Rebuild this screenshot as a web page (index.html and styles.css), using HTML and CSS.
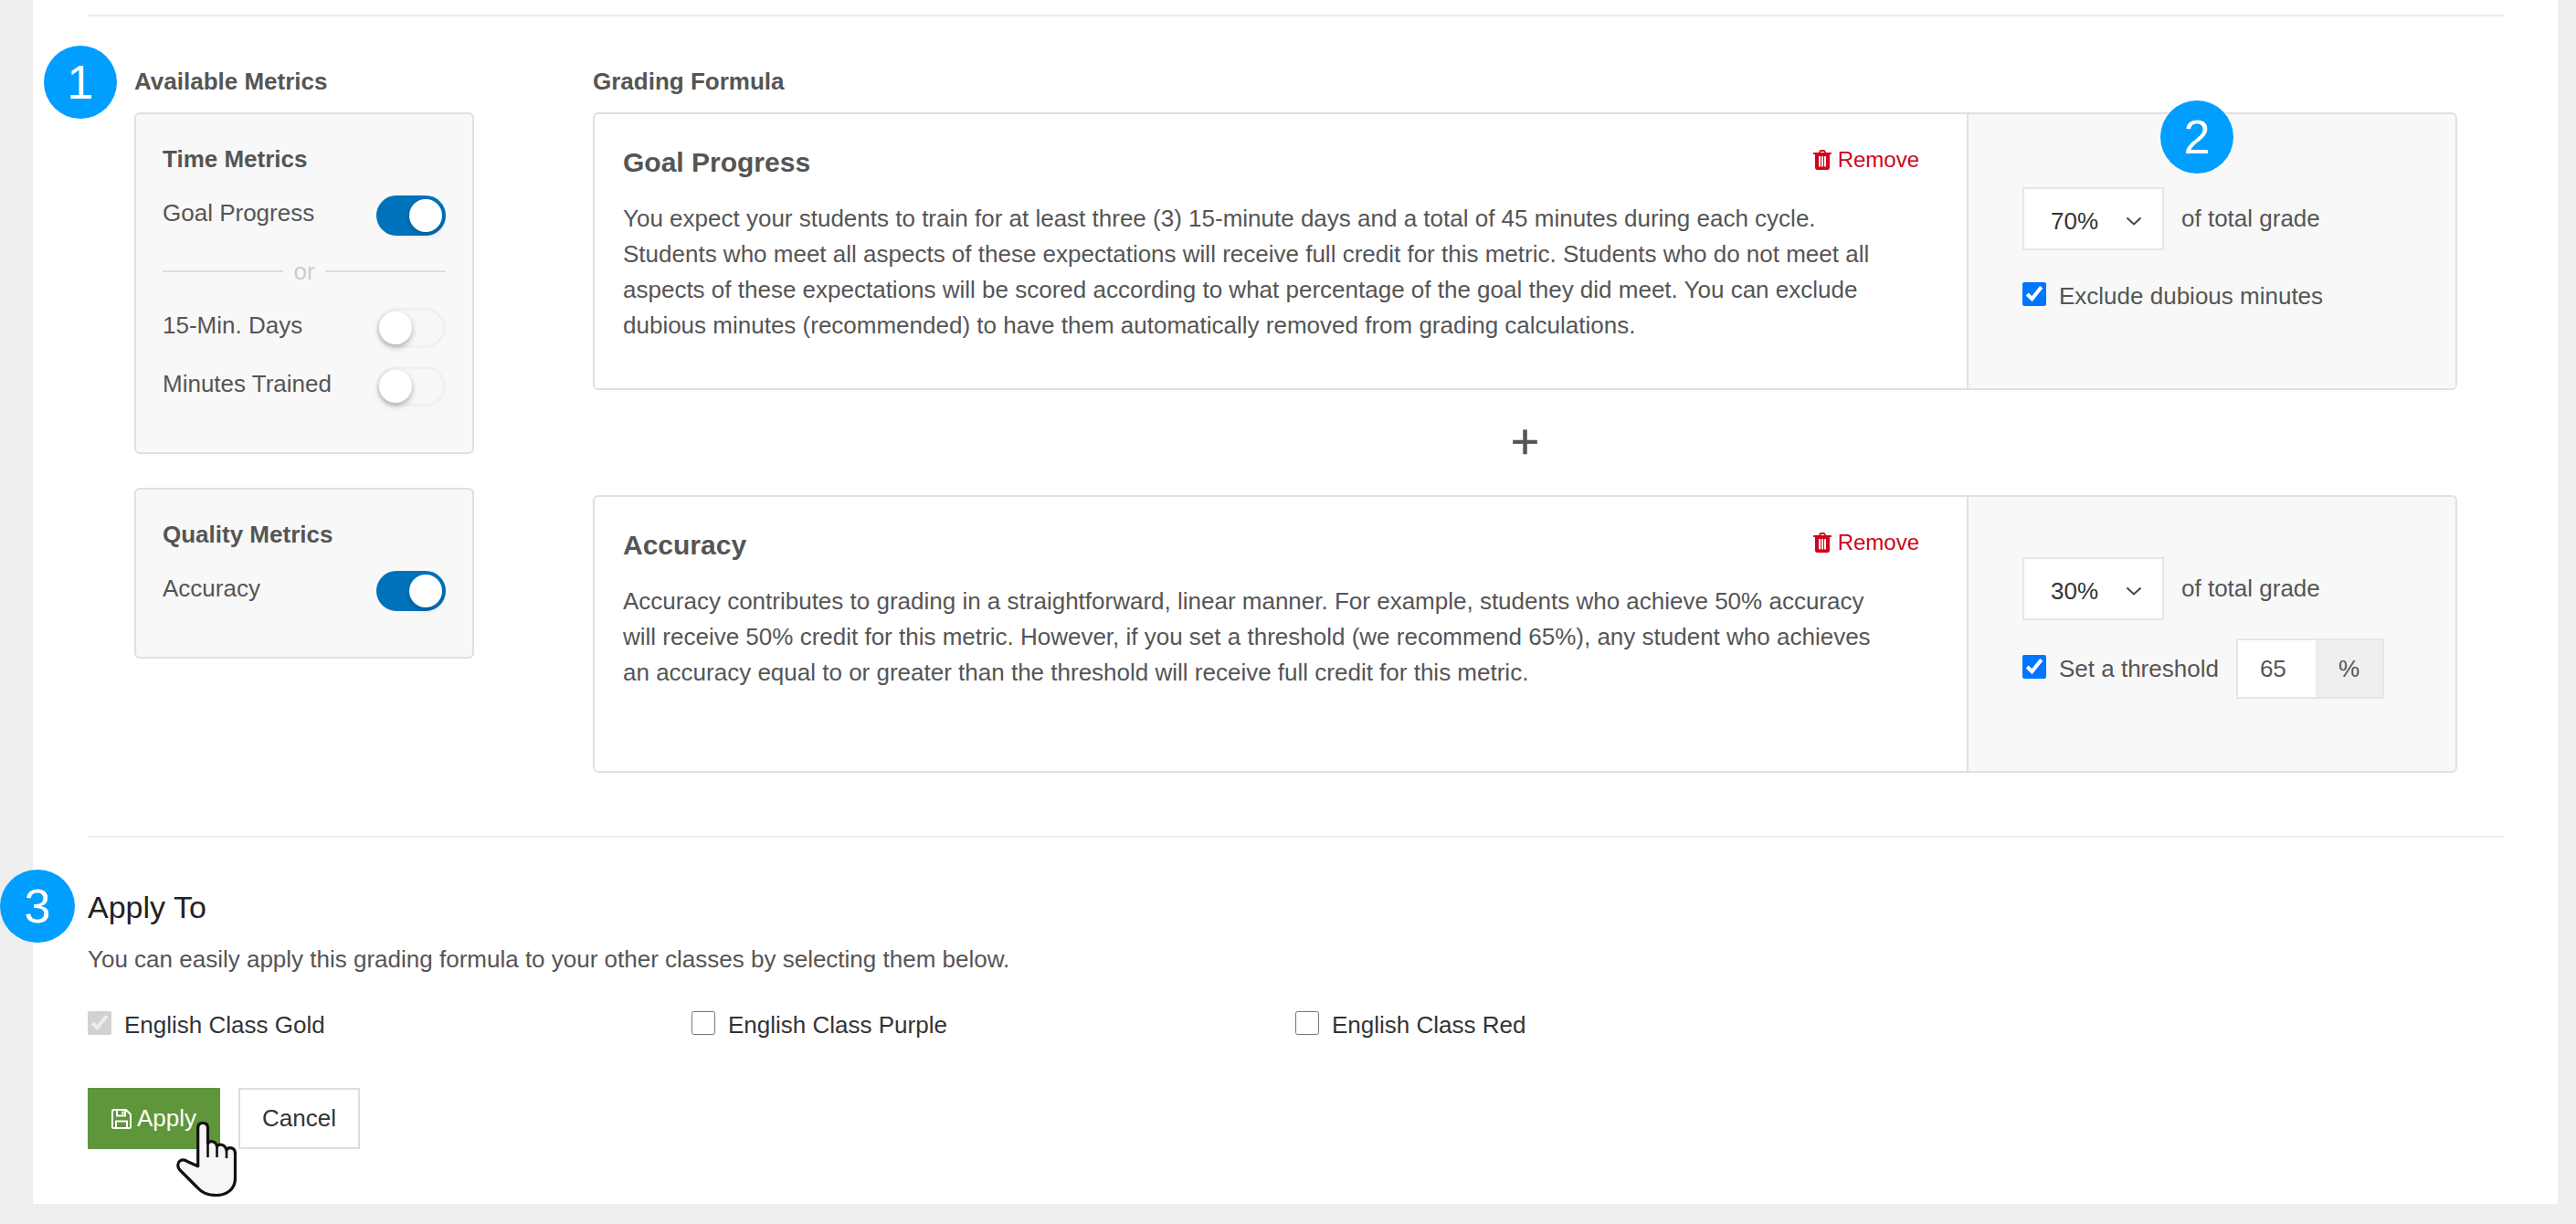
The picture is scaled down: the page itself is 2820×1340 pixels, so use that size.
FILE: index.html
```html
<!DOCTYPE html>
<html lang="en">
<head>
    <meta charset="UTF-8">
    <title>Grading Formula</title>
    <link rel="stylesheet" href="styles.css">
</head>
<body>
    <div class="page">
        <span class="step step-1">1</span>
        <span class="step step-2">2</span>
        <span class="step step-3">3</span>

        <div class="formula-section">
            <div class="metrics-col">
                <h4 class="col-title">Available Metrics</h4>

                <div class="metric-card">
                    <h5>Time Metrics</h5>
                    <div class="metric-row">
                        <span>Goal Progress</span>
                        <span class="toggle on"></span>
                    </div>
                    <div class="or-line">or</div>
                    <div class="metric-row">
                        <span>15-Min. Days</span>
                        <span class="toggle"></span>
                    </div>
                    <div class="metric-row">
                        <span>Minutes Trained</span>
                        <span class="toggle"></span>
                    </div>
                </div>

                <div class="metric-card">
                    <h5>Quality Metrics</h5>
                    <div class="metric-row">
                        <span>Accuracy</span>
                        <span class="toggle on"></span>
                    </div>
                </div>
            </div>

            <div class="formula-col">
                <h4 class="col-title">Grading Formula</h4>

                <div class="formula-card">
                    <div class="formula-text">
                        <div class="formula-head">
                            <h3>Goal Progress</h3>
                            <a class="remove">
                                <svg viewBox="0 0 20 22" width="20" height="22"><path fill="#d0021b" d="M6 3 7 .8C7.200.3 7.700 0 8.200 0h3.600c.5 0 1 .3 1.200.8L14 3h5c.6 0 1 .4 1 1v.5c0 .3-.2.500-.5.500H18v14.500c0 1.400-1.100 2.500-2.500 2.500h-11C3.100 22 2 20.900 2 19.500V5H.5C.2 5 0 4.800 0 4.500V4c0-.6.400-1 1-1h5Zm2-.9L7.700 3h4.600l-.3-.9H8ZM6.500 7c-.3 0-.5.200-.5.500v10.500c0 .3.200.5.500.5h1c.3 0 .5-.2.500-.5V7.500c0-.3-.2-.5-.5-.5h-1Zm3 0c-.3 0-.5.200-.5.500v10.500c0 .3.200.5.500.5h1c.3 0 .5-.2.500-.5V7.500c0-.3-.2-.5-.5-.5h-1Zm3 0c-.3 0-.5.200-.5.500v10.500c0 .3.200.5.500.5h1c.3 0 .5-.2.500-.5V7.500c0-.3-.2-.5-.5-.5h-1Z"/></svg>
                                Remove
                            </a>
                        </div>
                        <p>You expect your students to train for at least three (3) 15-minute days and a total of 45 minutes during each cycle. Students who meet all aspects of these expectations will receive full credit for this metric. Students who do not meet all aspects of these expectations will be scored according to what percentage of the goal they did meet. You can exclude dubious minutes (recommended) to have them automatically removed from grading calculations.</p>
                    </div>
                    <div class="formula-side">
                        <div class="grade-row">
                            <div class="pct-select">70%
                                <svg viewBox="0 0 18 10" width="18" height="10"><path d="M1.500 1.500 9 8.500l7.500-7" fill="none" stroke="#444" stroke-width="2"/></svg>
                            </div>
                            <span>of total grade</span>
                        </div>
                        <label class="check-row exclude">
                            <input type="checkbox" checked>
                            <span>Exclude dubious minutes</span>
                        </label>
                    </div>
                </div>

                <div class="plus">+</div>

                <div class="formula-card">
                    <div class="formula-text">
                        <div class="formula-head">
                            <h3>Accuracy</h3>
                            <a class="remove">
                                <svg viewBox="0 0 20 22" width="20" height="22"><path fill="#d0021b" d="M6 3 7 .8C7.200.3 7.700 0 8.200 0h3.600c.5 0 1 .3 1.200.8L14 3h5c.6 0 1 .4 1 1v.5c0 .3-.2.500-.5.500H18v14.500c0 1.400-1.100 2.500-2.500 2.500h-11C3.100 22 2 20.900 2 19.500V5H.5C.2 5 0 4.800 0 4.500V4c0-.6.400-1 1-1h5Zm2-.9L7.700 3h4.600l-.3-.9H8ZM6.500 7c-.3 0-.5.200-.5.500v10.500c0 .3.200.5.500.5h1c.3 0 .5-.2.500-.5V7.500c0-.3-.2-.5-.5-.5h-1Zm3 0c-.3 0-.5.200-.5.500v10.500c0 .3.200.5.500.5h1c.3 0 .5-.2.500-.5V7.500c0-.3-.2-.5-.5-.5h-1Zm3 0c-.3 0-.5.200-.5.500v10.500c0 .3.200.5.500.5h1c.3 0 .5-.2.500-.5V7.500c0-.3-.2-.5-.5-.5h-1Z"/></svg>
                                Remove
                            </a>
                        </div>
                        <p>Accuracy contributes to grading in a straightforward, linear manner. For example, students who achieve 50% accuracy will receive 50% credit for this metric. However, if you set a threshold (we recommend 65%), any student who achieves an accuracy equal to or greater than the threshold will receive full credit for this metric.</p>
                    </div>
                    <div class="formula-side side-threshold">
                        <div class="grade-row">
                            <div class="pct-select">30%
                                <svg viewBox="0 0 18 10" width="18" height="10"><path d="M1.500 1.500 9 8.500l7.500-7" fill="none" stroke="#444" stroke-width="2"/></svg>
                            </div>
                            <span>of total grade</span>
                        </div>
                        <div class="threshold-row">
                            <label class="check-row">
                                <input type="checkbox" checked>
                                <span>Set a threshold</span>
                            </label>
                            <div class="input-group">
                                <span class="input-value">65</span>
                                <span class="input-addon">%</span>
                            </div>
                        </div>
                    </div>
                </div>
            </div>
        </div>

        <div class="apply-section">
            <h2>Apply To</h2>
            <p>You can easily apply this grading formula to your other classes by selecting them below.</p>
            <div class="class-list">
                <label class="check-row"><input type="checkbox" checked disabled><span>English Class Gold</span></label>
                <label class="check-row"><input type="checkbox"><span>English Class Purple</span></label>
                <label class="check-row"><input type="checkbox"><span>English Class Red</span></label>
            </div>
            <div class="actions">
                <button class="btn btn-apply">
                    <svg viewBox="0 0 22 22" width="22" height="22"><path fill="none" stroke="#fff" stroke-width="2" stroke-linejoin="round" d="M1 2.500C1 1.700 1.700 1 2.500 1H16l5 5v13.500c0 .8-.7 1.500-1.500 1.500h-17C1.700 21 1 20.300 1 19.500V2.500Z"/><path fill="none" stroke="#fff" stroke-width="2" d="M6 1v6.500h9V1M5 21v-7.500h12V21"/><path fill="#fff" d="M11.500 2.500h2v3.500h-2z"/></svg>
                    Apply
                </button>
                <button class="btn btn-cancel">Cancel</button>
            </div>
        </div>

        <svg class="hand" viewBox="0 0 66 82" width="66" height="82">
            <path fill="#f6f6f6" stroke="#111" stroke-width="3.200" stroke-linejoin="round" stroke-linecap="round" d="M23.700 48.700V7C23.700 3 26 1.500 29 1.500S34.500 3 34.500 7V24C36 21 43 20 44.500 27C46 24 53 24 55 31C57 27 64.500 28 64.500 35V62C64.500 73 56 80.500 44 80.500C34 80.500 28 78 22 71L4 53C1 50 1 45 4 43C7 41 10 42 13 44Z"/>
            <path fill="none" stroke="#111" stroke-width="2.600" d="M34.500 24V39M44.500 27V39M55 31V40"/>
        </svg>
    </div>
</body>
</html>
```

FILE: styles.css
```css
* {
    box-sizing: border-box;
}
html, body {
    margin: 0;
    padding: 0;
}
body {
    width: 2820px;
    height: 1340px;
    overflow: hidden;
    background-color: #eeeeee;
    font-family: "Liberation Sans", Arial, sans-serif;
    font-size: 26px;
    color: #555555;
}
.page {
    position: relative;
    width: 2764px;
    height: 1318px;
    margin-left: 36px;
    padding: 16px 59px 0 60px;
    background: #ffffff;
}

/* numbered callouts */
.step {
    position: absolute;
    display: flex;
    align-items: center;
    justify-content: center;
    width: 80px;
    height: 80px;
    border-radius: 50%;
    background: #009fff;
    color: #ffffff;
    font-size: 52px;
}
.step-1 {
    left: 12px;
    top: 50px;
}
.step-2 {
    left: 2329px;
    top: 110px;
}
.step-3 {
    left: -36px;
    top: 952px;
    width: 82px;
}

/* top area */
.formula-section {
    display: grid;
    grid-template-columns: 372px 1fr;
    column-gap: 130px;
    height: 901px;
    padding: 56px 51px 0 51px;
    border-top: 2px solid #eeeeee;
    border-bottom: 2px solid #eeeeee;
}
.col-title {
    margin: 0 0 19px;
    font-size: 26px;
    line-height: 30px;
    font-weight: bold;
}
.metric-card {
    margin-bottom: 37px;
    padding: 34px 29px 50px 29px;
    background: #f8f8f8;
    border: 2px solid #e0e0e0;
    border-radius: 6px;
}
.metric-card h5 {
    margin: 0 0 25px;
    font-size: 26px;
    line-height: 30px;
    font-weight: bold;
}
.metric-row {
    display: flex;
    justify-content: space-between;
    align-items: flex-start;
    line-height: 38px;
}
.metric-row + .metric-row {
    margin-top: 20px;
}
.or-line {
    display: flex;
    align-items: center;
    gap: 11px;
    margin: 24px 0 25px;
    font-size: 26px;
    line-height: 30px;
    color: #cccccc;
}
.or-line::before, .or-line::after {
    content: "";
    flex: 1;
    height: 2px;
    background: #dddddd;
}
.toggle {
    position: relative;
    width: 76px;
    height: 44px;
    border: 3px solid #f0f0f0;
    border-radius: 22px;
    background: #f8f8f8;
}
.toggle::after {
    content: "";
    position: absolute;
    left: 0;
    top: 1px;
    width: 36px;
    height: 36px;
    border-radius: 50%;
    background: #ffffff;
    box-shadow: 0 3px 6px rgba(0, 0, 0, 0.3);
}
.toggle.on {
    background: #0072bc;
    border-color: #0072bc;
}
.toggle.on::after {
    left: 33px;
    box-shadow: 0 3px 6px rgba(0, 0, 0, 0.2);
}

/* formula cards */
.formula-card {
    display: flex;
    height: 304px;
    border: 2px solid #e0e0e0;
    border-radius: 6px;
}
.formula-text {
    flex: 1;
    padding: 35px 86px 0 31px;
}
.formula-head {
    display: flex;
    justify-content: space-between;
    align-items: flex-start;
    margin-right: -34px;
}
.formula-head h3 {
    margin: 0;
    font-size: 30px;
    line-height: 36px;
    font-weight: bold;
}
.remove {
    display: flex;
    align-items: center;
    gap: 7px;
    font-size: 24px;
    line-height: 30px;
    color: #d0021b;
}
.formula-text p {
    margin: 24px 0 0;
    line-height: 39px;
}
.formula-side {
    flex: none;
    width: 535px;
    padding: 80px 0 0 59px;
    background: #f8f8f8;
    border-left: 2px solid #e0e0e0;
    border-radius: 0 5px 5px 0;
}
.side-threshold {
    padding-top: 66px;
}
.grade-row {
    display: flex;
    align-items: center;
    gap: 19px;
}
.pct-select {
    display: flex;
    align-items: center;
    justify-content: space-between;
    width: 155px;
    height: 69px;
    padding: 5px 22px 0 29px;
    background: #ffffff;
    border: 2px solid #e6e6e6;
    color: #333333;
}
.plus {
    margin: 29px 0 31px;
    height: 55px;
    text-align: center;
    font-size: 54px;
    line-height: 55px;
    -webkit-text-stroke: 0.5px #555555;
}
.check-row {
    display: flex;
    align-items: flex-start;
    gap: 14px;
    line-height: 30px;
}
.check-row input {
    width: 26px;
    height: 26px;
    margin: 0;
}
.exclude {
    margin-top: 35px;
}
.threshold-row {
    display: flex;
    align-items: center;
    gap: 19px;
    margin-top: 20px;
}
.input-group {
    display: flex;
    width: 162px;
    height: 66px;
    border: 2px solid #e6e6e6;
}
.input-value {
    width: 85px;
    padding: 0 0 0 24px;
    background: #ffffff;
    line-height: 62px;
}
.input-addon {
    flex: 1;
    padding-left: 25px;
    background: #eeeeee;
    line-height: 62px;
}

/* apply to */
.apply-section h2 {
    margin: 56px 0 0;
    font-size: 34px;
    line-height: 40px;
    font-weight: normal;
    color: #222222;
}
.apply-section p {
    margin: 22px 0 0;
    line-height: 30px;
}
.class-list {
    display: grid;
    grid-template-columns: repeat(3, 661px);
    margin-top: 42px;
    color: #333333;
}
.actions {
    display: flex;
    gap: 20px;
    margin-top: 54px;
}
.btn {
    height: 67px;
    font-family: inherit;
    font-size: 26px;
    border-radius: 0;
}
.btn-apply {
    display: flex;
    align-items: center;
    gap: 6px;
    width: 145px;
    padding: 0 0 0 26px;
    background: #5f963c;
    border: none;
    color: #ffffff;
}
.btn-cancel {
    width: 133px;
    padding: 0;
    background: #ffffff;
    border: 2px solid #dddddd;
    color: #333333;
}
.hand {
    position: absolute;
    left: 157px;
    top: 1228px;
}
```
